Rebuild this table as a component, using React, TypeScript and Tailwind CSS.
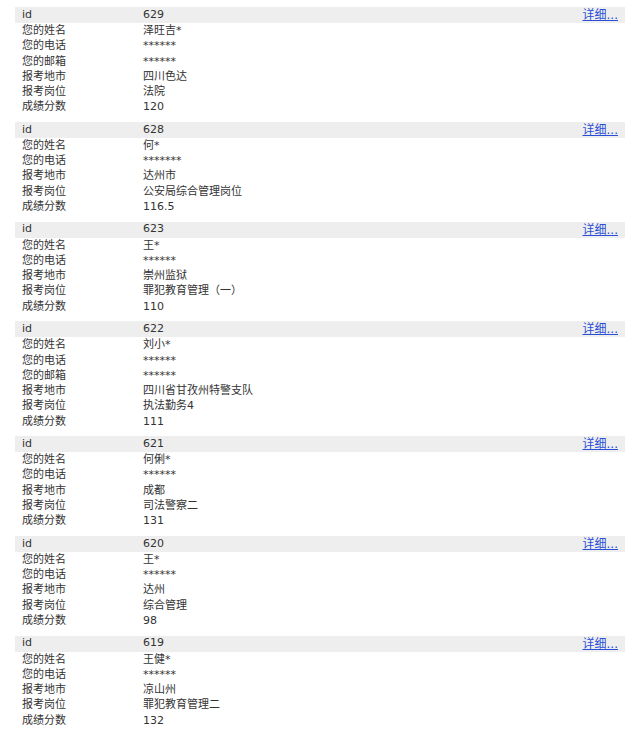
const records = [
  {
    id: "629",
    rows: [
      ["您的姓名", "泽旺吉*"],
      ["您的电话", "******"],
      ["您的邮箱", "******"],
      ["报考地市", "四川色达"],
      ["报考岗位", "法院"],
      ["成绩分数", "120"],
    ],
  },
  {
    id: "628",
    rows: [
      ["您的姓名", "何*"],
      ["您的电话", "*******"],
      ["报考地市", "达州市"],
      ["报考岗位", "公安局综合管理岗位"],
      ["成绩分数", "116.5"],
    ],
  },
  {
    id: "623",
    rows: [
      ["您的姓名", "王*"],
      ["您的电话", "******"],
      ["报考地市", "崇州监狱"],
      ["报考岗位", "罪犯教育管理（一）"],
      ["成绩分数", "110"],
    ],
  },
  {
    id: "622",
    rows: [
      ["您的姓名", "刘小*"],
      ["您的电话", "******"],
      ["您的邮箱", "******"],
      ["报考地市", "四川省甘孜州特警支队"],
      ["报考岗位", "执法勤务4"],
      ["成绩分数", "111"],
    ],
  },
  {
    id: "621",
    rows: [
      ["您的姓名", "何俐*"],
      ["您的电话", "******"],
      ["报考地市", "成都"],
      ["报考岗位", "司法警察二"],
      ["成绩分数", "131"],
    ],
  },
  {
    id: "620",
    rows: [
      ["您的姓名", "王*"],
      ["您的电话", "******"],
      ["报考地市", "达州"],
      ["报考岗位", "综合管理"],
      ["成绩分数", "98"],
    ],
  },
  {
    id: "619",
    rows: [
      ["您的姓名", "王健*"],
      ["您的电话", "******"],
      ["报考地市", "凉山州"],
      ["报考岗位", "罪犯教育管理二"],
      ["成绩分数", "132"],
    ],
  },
];

function Record({ id, rows }: { id: string; rows: string[][] }) {
  return (
    <div className="mb-[7.2px]">
      {/* header row */}
      <div className="flex h-4 items-center bg-[#eeeeee] px-[7px]">
        <span className="w-[121px]">id</span>
        <span className="flex-1">{id}</span>
        <a href="#" className="text-[12px] text-[#2a4fd6] underline">
          详细...
        </a>
      </div>
      {rows.map(([label, value]) => (
        <div key={label} className="flex h-[15.3px] items-center pt-px px-[7px]">
          <span className="w-[121px]">{label}</span>
          <span className="flex-1">{value}</span>
        </div>
      ))}
    </div>
  );
}

export default function App() {
  return (
    <div
      className="h-[734px] bg-white pt-[7px] pl-[15px] pr-[15px] text-[11px] text-[#333333]"
      style={{ fontFamily: '"DejaVu Sans", "Noto Sans CJK SC", sans-serif' }}
    >
      {records.map((r) => (
        <Record key={r.id} id={r.id} rows={r.rows} />
      ))}
    </div>
  );
}
